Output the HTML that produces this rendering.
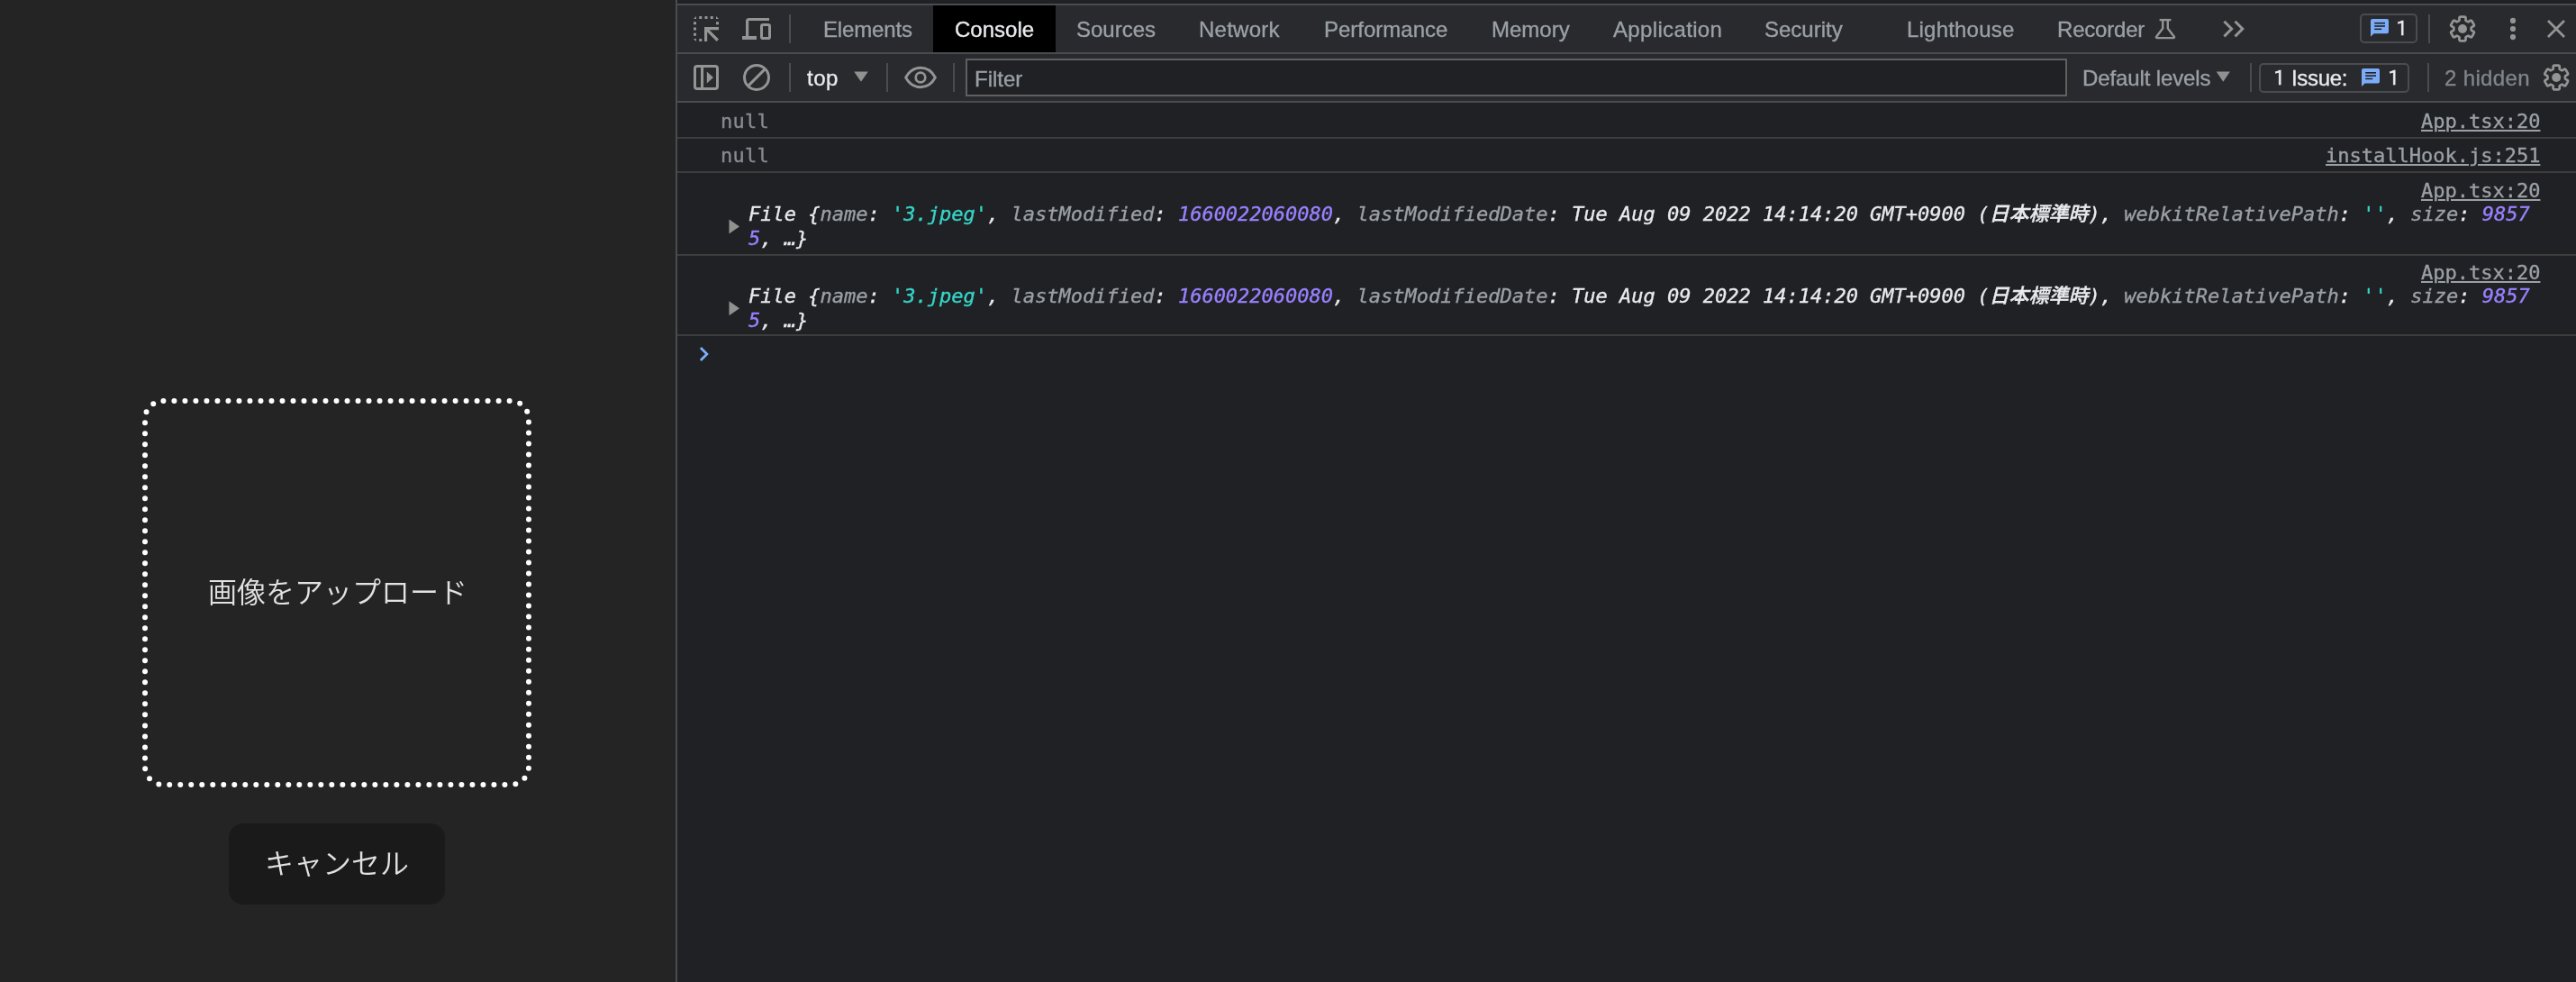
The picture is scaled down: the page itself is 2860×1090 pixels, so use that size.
<!DOCTYPE html>
<html lang="ja">
<head>
<meta charset="utf-8">
<title>Upload</title>
<style>
*{margin:0;padding:0;box-sizing:border-box}
html,body{width:2860px;height:1090px;overflow:hidden;background:#202124}
body{position:relative;font-family:"Liberation Sans","Noto Sans CJK JP",sans-serif;}
.abs{position:absolute}
.t{position:absolute;white-space:nowrap;line-height:24px;font-size:24px;color:#9aa0a6}
.mono{font-family:"DejaVu Sans Mono","Noto Sans CJK JP",monospace;font-size:22px;line-height:28px}
svg{position:absolute;overflow:visible}
.t,#drop span,#cancel span{will-change:transform}
.t{-webkit-text-stroke:0.35px currentColor}
.mono b{font-weight:500}
.one{font-family:"IPAPGothic","IPAGothic","Liberation Sans",sans-serif;font-size:21px;line-height:21px;-webkit-text-stroke:0.6px currentColor}
/* left app */
#app{left:0;top:0;width:750px;height:1090px;background:#242424}
#drop{left:158px;top:442px;width:432px;height:432px;
 display:flex;align-items:center;justify-content:center;color:rgba(255,255,255,.87);font-size:32px;font-weight:350;line-height:48px}
#cancel{left:254px;top:914px;width:240px;height:90px;background:#1a1a1a;border-radius:16px;
 display:flex;align-items:center;justify-content:center;color:rgba(255,255,255,.87);font-size:32px;font-weight:350;line-height:48px}
/* devtools */
#vdiv{left:750px;top:0;width:2px;height:1090px;background:#494c50}
#topstrip{left:752px;top:0;width:2108px;height:4px;background:#202124}
.hl{left:752px;width:2108px;height:2px;background:#494c50}
#tabbar{left:752px;top:6px;width:2108px;height:52px;background:#292a2d}
#ctool{left:752px;top:60px;width:2108px;height:52px;background:#292a2d}
#seltab{left:1036px;top:6px;width:136px;height:52px;background:#000}
.sep{width:2px;height:32px;background:#4a4c50}
.rb{left:752px;width:2108px;height:2px;background:#3d3d3d}
#filter{left:1072px;top:65px;width:1223px;height:42px;border:2px solid #606060;background:#202124}
.badge{border:2px solid #4a4c50;border-radius:5px}
.lnk{color:#9aa0a6;text-decoration:underline;text-decoration-thickness:2px;text-underline-offset:2px}
.i{font-style:italic}
.w{color:#e8eaed}.g{color:#9aa0a6}.s{color:#35d4c7}.n{color:#9980ff}
</style>
</head>
<body>
<!-- ============ LEFT: app ============ -->
<div id="app" class="abs">
  <div id="drop" class="abs"><span style="position:relative;left:1px">画像をアップロード</span></div>
  <div id="cancel" class="abs"><span>キャンセル</span></div>
</div>

<!-- ============ RIGHT: devtools ============ -->
<div id="vdiv" class="abs"></div>
<div id="topstrip" class="abs"></div>
<div class="abs hl" style="top:4px"></div>
<div id="tabbar" class="abs"></div>
<div class="abs hl" style="top:58px"></div>
<div id="ctool" class="abs"></div>
<div class="abs hl" style="top:112px"></div>

<!-- tab bar -->
<div id="seltab" class="abs"></div>
<div class="abs sep" style="left:876px;top:16px"></div>
<div class="t" style="left:913.5px;top:21px;letter-spacing:-0.15px">Elements</div>
<div class="t" style="left:1060px;top:21px;color:#e8eaed">Console</div>
<div class="t" style="left:1195px;top:21px">Sources</div>
<div class="t" style="left:1331px;top:21px;letter-spacing:0.25px">Network</div>
<div class="t" style="left:1470px;top:21px">Performance</div>
<div class="t" style="left:1656px;top:21px">Memory</div>
<div class="t" style="left:1791px;top:21px;letter-spacing:0.35px">Application</div>
<div class="t" style="left:1958.8px;top:21px">Security</div>
<div class="t" style="left:2117px;top:21px;letter-spacing:0.2px">Lighthouse</div>
<div class="t" style="left:2284px;top:21px;letter-spacing:-0.2px">Recorder</div>
<div class="abs badge" style="left:2620px;top:15px;width:64px;height:33px"></div>
<div class="t one" style="left:2660px;top:21px;color:#e8eaed">1</div>
<div class="abs sep" style="left:2696px;top:16px"></div>

<!-- console toolbar -->
<div class="abs sep" style="left:876px;top:70px"></div>
<div class="t" style="left:896px;top:75px;color:#e8eaed;letter-spacing:0.5px">top</div>
<div class="abs sep" style="left:984px;top:70px"></div>
<div class="abs sep" style="left:1058px;top:70px"></div>
<div id="filter" class="abs"></div>
<div class="t" style="left:1081.5px;top:76px">Filter</div>
<div class="t" style="left:2311.8px;top:75px;letter-spacing:-0.12px">Default levels</div>
<div class="abs sep" style="left:2498px;top:70px"></div>
<div class="abs badge" style="left:2508px;top:70px;width:167px;height:33px"></div>
<div class="t one" style="left:2524px;top:76px;color:#e8eaed">1</div>
<div class="t" style="left:2544px;top:75px;color:#e8eaed;letter-spacing:-0.3px">Issue:</div>
<div class="t one" style="left:2650.5px;top:76px;color:#e8eaed">1</div>
<div class="abs sep" style="left:2695px;top:70px"></div>
<div class="t" style="left:2713.6px;top:75px;color:#80868b;letter-spacing:0.35px">2 hidden</div>

<!-- console rows -->
<div class="abs rb" style="top:152px"></div>
<div class="abs rb" style="top:190px"></div>
<div class="abs rb" style="top:282px"></div>
<div class="abs rb" style="top:371px"></div>

<div class="t mono" style="left:800px;top:121px;color:#868b90;letter-spacing:0.25px">null</div>
<div class="t mono lnk" style="right:40px;top:121px">App.tsx:20</div>
<div class="t mono" style="left:800px;top:159px;color:#868b90;letter-spacing:0.25px">null</div>
<div class="t mono lnk" style="right:40px;top:159px">installHook.js:251</div>

<div class="t mono lnk" style="right:40px;top:198px">App.tsx:20</div>
<div class="t mono i w" style="left:831px;top:224px">File {<span class="g">name</span>: <span class="s">'3.jpeg'</span>, <span class="g">lastModified</span>: <span class="n">1660022060080</span>, <span class="g">lastModifiedDate</span>: Tue Aug 09 2022 14:14:20 GMT+0900 (<b>日本標準時</b>), <span class="g">webkitRelativePath</span>: <span class="s">''</span>, <span class="g">size</span>: <span class="n">9857</span></div>
<div class="t mono i w" style="left:831px;top:251px"><span class="n">5</span>, …}</div>

<div class="t mono lnk" style="right:40px;top:289px">App.tsx:20</div>
<div class="t mono i w" style="left:831px;top:315px">File {<span class="g">name</span>: <span class="s">'3.jpeg'</span>, <span class="g">lastModified</span>: <span class="n">1660022060080</span>, <span class="g">lastModifiedDate</span>: Tue Aug 09 2022 14:14:20 GMT+0900 (<b>日本標準時</b>), <span class="g">webkitRelativePath</span>: <span class="s">''</span>, <span class="g">size</span>: <span class="n">9857</span></div>
<div class="t mono i w" style="left:831px;top:342px"><span class="n">5</span>, …}</div>

<!-- ICONS -->
<svg id="icons" style="left:0;top:0" width="2860" height="1090" viewBox="0 0 2860 1090">
<rect x="161" y="445" width="426" height="426" rx="20" ry="20" fill="none" stroke="#fff" stroke-width="6" stroke-linecap="round" stroke-dasharray="0 12.008" stroke-dashoffset="-0.4"/>
<path d="M773,18 V21 H770 Z" fill="#949494"/>
<rect x="776.25" y="18" width="3" height="3" fill="#949494"/>
<rect x="782.5" y="18" width="3" height="3" fill="#949494"/>
<rect x="788.75" y="18" width="3" height="3" fill="#949494"/>
<path d="M795,18 L798,21 H795Z" fill="#949494"/>
<rect x="770" y="24.25" width="3" height="3" fill="#949494"/>
<rect x="770" y="30.5" width="3" height="3" fill="#949494"/>
<rect x="770" y="36.75" width="3" height="3" fill="#949494"/>
<path d="M770,43 H773 V46Z" fill="#949494"/>
<rect x="795" y="24.25" width="3" height="3" fill="#949494"/>
<rect x="776.25" y="43" width="3" height="3" fill="#949494"/>
<path d="M782,30 H798 V33.2 H787.6 L798,43.6 L795.7,45.9 L785.2,35.4 V46 H782Z" fill="#949494"/>
<path d="M854,20 H831.5 Q828,20 828,23.5 V40 H824 V44 H840 V40 H831.2 V23.1 H854Z" fill="#949494"/>
<rect x="845.5" y="27.6" width="9" height="14.9" rx="1.6" fill="none" stroke="#949494" stroke-width="3"/>
<rect x="771.5" y="73.5" width="25" height="25" rx="2.5" fill="none" stroke="#949494" stroke-width="3"/>
<rect x="778" y="73" width="3.1" height="26" fill="#949494"/>
<path d="M784.8,79.6 L792,86.1 L784.8,92.6Z" fill="#949494"/>
<circle cx="840" cy="86" r="13.5" fill="none" stroke="#949494" stroke-width="3"/>
<path d="M830.6,95.4 L849.4,76.6" stroke="#949494" stroke-width="3" fill="none"/>
<path d="M948.2,79.4 H963.8 L956,90.7Z" fill="#919191"/>
<path d="M2460.7,79.4 H2475.9 L2468.3,90.8Z" fill="#919191"/>
<path d="M1005.6,86 C1009.5,78.8 1015.5,75.3 1022,75.3 C1028.5,75.3 1034.5,78.8 1038.4,86 C1034.5,93.2 1028.5,96.7 1022,96.7 C1015.5,96.7 1009.5,93.2 1005.6,86Z" fill="none" stroke="#949494" stroke-width="2.9" stroke-linejoin="round"/>
<circle cx="1022" cy="86" r="5.3" fill="none" stroke="#949494" stroke-width="2.7"/>
<path d="M2397.6,22.1 H2410.4" stroke="#949494" stroke-width="2.4" fill="none"/>
<path d="M2401.2,22 V31.6 L2394.3,40.4 Q2393.2,42.1 2395.2,42.1 H2412.8 Q2414.8,42.1 2413.7,40.4 L2406.8,31.6 V22" stroke="#949494" stroke-width="2.4" fill="none" stroke-linejoin="round"/>
<path d="M2469.4,23.7 L2477.7,32.05 L2469.4,40.4 M2481.5,23.7 L2489.8,32.05 L2481.5,40.4" stroke="#949494" stroke-width="3" fill="none"/>
<path d="M2634.00,21.00 H2650.00 Q2652.00,21.00 2652.00,23.00 V35.30 Q2652.00,37.30 2650.00,37.30 H2635.60 L2632.00,40.80 V23.00 Q2632.00,21.00 2634.00,21.00Z" fill="#7cacf8"/><rect x="2636.20" y="24.90" width="11.80" height="1.60" fill="#202124"/><rect x="2636.20" y="28.20" width="11.80" height="1.60" fill="#202124"/><rect x="2636.20" y="31.60" width="8.00" height="1.50" fill="#202124"/>
<path d="M2624.00,76.10 H2640.00 Q2642.00,76.10 2642.00,78.10 V90.40 Q2642.00,92.40 2640.00,92.40 H2625.60 L2622.00,95.90 V78.10 Q2622.00,76.10 2624.00,76.10Z" fill="#7cacf8"/><rect x="2626.20" y="80.00" width="11.80" height="1.60" fill="#202124"/><rect x="2626.20" y="83.30" width="11.80" height="1.60" fill="#202124"/><rect x="2626.20" y="86.70" width="8.00" height="1.50" fill="#202124"/>
<path d="M2730.50,22.63 L2730.45,19.94 Q2730.43,18.67 2731.86,18.67 L2736.14,18.67 Q2737.57,18.67 2737.55,19.94 L2737.50,22.63 Q2738.65,23.95 2740.36,24.28 L2742.67,22.90 Q2743.76,22.24 2744.47,23.48 L2746.62,27.19 Q2747.33,28.43 2746.22,29.04 L2743.86,30.35 Q2743.30,32.00 2743.86,33.65 L2746.22,34.96 Q2747.33,35.57 2746.62,36.81 L2744.47,40.52 Q2743.76,41.76 2742.67,41.10 L2740.36,39.72 Q2738.65,40.05 2737.50,41.37 L2737.55,44.06 Q2737.57,45.33 2736.14,45.33 L2731.86,45.33 Q2730.43,45.33 2730.45,44.06 L2730.50,41.37 Q2729.35,40.05 2727.64,39.72 L2725.33,41.10 Q2724.24,41.76 2723.53,40.52 L2721.38,36.81 Q2720.67,35.57 2721.78,34.96 L2724.14,33.65 Q2724.70,32.00 2724.14,30.35 L2721.78,29.04 Q2720.67,28.43 2721.38,27.19 L2723.53,23.48 Q2724.24,22.24 2725.33,22.90 L2727.64,24.28 Q2729.35,23.95 2730.50,22.63Z" fill="none" stroke="#949494" stroke-width="2.7" stroke-linejoin="round"/><circle cx="2734.0" cy="32.0" r="5" fill="#949494"/>
<path d="M2834.70,76.63 L2834.65,73.94 Q2834.63,72.67 2836.06,72.67 L2840.34,72.67 Q2841.77,72.67 2841.75,73.94 L2841.70,76.63 Q2842.85,77.95 2844.56,78.28 L2846.87,76.90 Q2847.96,76.24 2848.67,77.48 L2850.82,81.19 Q2851.53,82.43 2850.42,83.04 L2848.06,84.35 Q2847.50,86.00 2848.06,87.65 L2850.42,88.96 Q2851.53,89.57 2850.82,90.81 L2848.67,94.52 Q2847.96,95.76 2846.87,95.10 L2844.56,93.72 Q2842.85,94.05 2841.70,95.37 L2841.75,98.06 Q2841.77,99.33 2840.34,99.33 L2836.06,99.33 Q2834.63,99.33 2834.65,98.06 L2834.70,95.37 Q2833.55,94.05 2831.84,93.72 L2829.53,95.10 Q2828.44,95.76 2827.73,94.52 L2825.58,90.81 Q2824.87,89.57 2825.98,88.96 L2828.34,87.65 Q2828.90,86.00 2828.34,84.35 L2825.98,83.04 Q2824.87,82.43 2825.58,81.19 L2827.73,77.48 Q2828.44,76.24 2829.53,76.90 L2831.84,78.28 Q2833.55,77.95 2834.70,76.63Z" fill="none" stroke="#949494" stroke-width="2.7" stroke-linejoin="round"/><circle cx="2838.2" cy="86.0" r="5" fill="#949494"/>
<circle cx="2790" cy="22.9" r="3.1" fill="#949494"/>
<circle cx="2790" cy="32.0" r="3.1" fill="#949494"/>
<circle cx="2790" cy="41.1" r="3.1" fill="#949494"/>
<path d="M2829,23 L2847,41 M2847,23 L2829,41" stroke="#949494" stroke-width="2.8" fill="none"/>
<path d="M809.5,243.4 L821,251.4 L809.5,259.4Z" fill="#919191"/>
<path d="M809.5,334.3 L821,342.3 L809.5,350.3Z" fill="#919191"/>
<path d="M777.9,386 L784.9,393 L777.9,400" stroke="#7db0fc" stroke-width="2.7" fill="none"/>
</svg>
</body>
</html>
